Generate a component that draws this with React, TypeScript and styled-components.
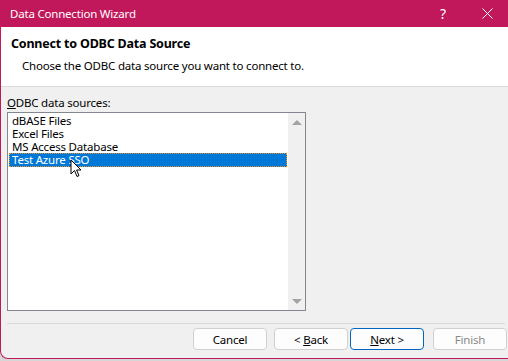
import React from 'react'
import styled, { createGlobalStyle } from 'styled-components'

const GlobalStyle = createGlobalStyle`
  html, body {
    margin: 0;
    padding: 0;
    background: #d6d6d6;
    overflow: hidden;
  }
  body {
    font-family: "Noto Sans", "Open Sans", sans-serif;
    font-size: 11.5px;
    letter-spacing: -0.2px;
  }
`;

const Window = styled.div`
  position: relative;
  width: 508px;
  height: 359px;
  box-sizing: border-box;
  display: flex;
  flex-direction: column;
  background: #f0f0f0;
  border-left: 1px solid #c2185b;
  border-bottom: 1px solid #c2185b;
  border-bottom-left-radius: 8px;
  overflow: hidden;
`;

const TitleBar = styled.div`
  height: 27px;
  flex: none;
  display: flex;
  align-items: center;
  background: #c0185a;
  color: #fff;
  padding-left: 9px;
`;

const Title = styled.div`
  flex: 1;
`;

const TitleButton = styled.div<{ $w: number }>`
  width: ${({ $w }) => $w}px;
  height: 27px;
  display: flex;
  align-items: center;
  justify-content: center;
  color: #fff;
  font-size: 14px;
`;

const Header = styled.div`
  height: 60px;
  flex: none;
  background: #fff;
  border-bottom: 1px solid #dadada;
  padding: 8px 0 0 10px;
  box-sizing: border-box;
`;

const HeaderTitle = styled.div`
  font-size: 12.5px;
  font-weight: 700;
  color: #000;
  line-height: 18px;
`;

const HeaderText = styled.div`
  margin: 5px 0 0 11px;
  color: #000;
  line-height: 16px;
`;

const Body = styled.div`
  flex: 1;
  display: flex;
  flex-direction: column;
  padding: 8px 0 0 6px;
`;

const Label = styled.div`
  line-height: 16px;
  color: #000;
  margin-bottom: 1px;
`;

const ListBox = styled.div`
  width: 299px;
  height: 199px;
  box-sizing: border-box;
  border: 1px solid #828790;
  display: flex;
  background: #fff;
`;

const Items = styled.div`
  flex: 1;
  padding: 1px 1px 0 1px;
`;

const Item = styled.div<{ $selected?: boolean }>`
  height: ${({ $selected }) => ($selected ? '14px' : '13px')};
  line-height: 12px;
  padding-left: 2px;
  box-sizing: border-box;
  color: ${({ $selected }) => ($selected ? '#fff' : '#000')};
  background: ${({ $selected }) => ($selected ? '#0078d7' : 'transparent')};
  border: 1px ${({ $selected }) => ($selected ? 'dotted #e8912a' : 'solid transparent')};
  white-space: nowrap;
`;

const ScrollBar = styled.div`
  width: 17px;
  flex: none;
  background: #f0f0f0;
  display: flex;
  flex-direction: column;
  justify-content: space-between;
  align-items: center;
  padding: 7px 0 6px;
`;

const Arrow = styled.div<{ $down?: boolean }>`
  width: 0;
  height: 0;
  border-left: 5px solid transparent;
  border-right: 5px solid transparent;
  ${({ $down }) =>
    $down ? 'border-top: 5px solid #a3a3a3;' : 'border-bottom: 5px solid #a3a3a3;'}
`;

const Separator = styled.div`
  width: 498px;
  height: 1px;
  background: #d9d9d9;
  margin-top: 12px;
`;

const ButtonRow = styled.div`
  display: flex;
  padding: 4px 0 0 186px;
`;

const Button = styled.div<{ $primary?: boolean; $disabled?: boolean; $gap?: number }>`
  width: 74px;
  height: 22px;
  box-sizing: border-box;
  margin-left: ${({ $gap }) => $gap ?? 0}px;
  display: flex;
  align-items: center;
  justify-content: center;
  background: #fdfdfd;
  border: 1px solid ${({ $primary }) => ($primary ? '#0067c0' : '#d0d0d0')};
  border-radius: 4px;
  color: ${({ $disabled }) => ($disabled ? '#8a8a8a' : '#000')};
  white-space: pre;
`;

const Cursor = styled.svg`
  position: absolute;
  left: 69px;
  top: 159px;
`;

const App: React.FC = () => {
  const items = ['dBASE Files', 'Excel Files', 'MS Access Database', 'Test Azure SSO']

  return (
    <>
      <GlobalStyle />
      <Window>
        <TitleBar>
          <Title>Data Connection Wizard</Title>
          <TitleButton $w={46}>?</TitleButton>
          <TitleButton $w={42}>
            <svg width="11" height="11" viewBox="0 0 11 11">
              <path d="M0.5 0.5 L10.5 10.5 M10.5 0.5 L0.5 10.5" stroke="#fff" strokeWidth="1" />
            </svg>
          </TitleButton>
        </TitleBar>

        <Header>
          <HeaderTitle>Connect to ODBC Data Source</HeaderTitle>
          <HeaderText>Choose the ODBC data source you want to connect to.</HeaderText>
        </Header>

        <Body>
          <Label><u>O</u>DBC data sources:</Label>
          <ListBox>
            <Items>
              {items.map((name, i) => (
                <Item key={name} $selected={i === items.length - 1}>{name}</Item>
              ))}
            </Items>
            <ScrollBar>
              <Arrow />
              <Arrow $down />
            </ScrollBar>
          </ListBox>
          <Separator />
          <ButtonRow>
            <Button>Cancel</Button>
            <Button $gap={7}><span>&lt; <u>B</u>ack</span></Button>
            <Button $gap={2} $primary><span><u>N</u>ext &gt;</span></Button>
            <Button $gap={9} $disabled>Finish</Button>
          </ButtonRow>
        </Body>

        <Cursor width="14" height="20" viewBox="0 0 14 20">
          <path d="M1 1 L1 15 L4.5 11.5 L7 17.5 L9 16.6 L6.6 11 L11 11 Z" fill="#fff" stroke="#000" strokeWidth="1" />
        </Cursor>
      </Window>
    </>
  )
}

export default App
